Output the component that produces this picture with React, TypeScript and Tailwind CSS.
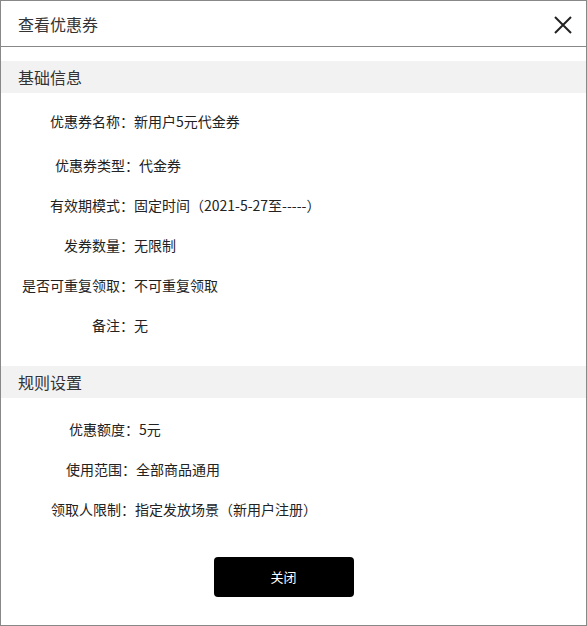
import React from 'react';

interface Row {
  label: string;
  value: string;
  labelWidth: string;
  extra?: string;
}

const basicRows: Row[] = [
  { label: '优惠券名称：', value: '新用户5元代金券', labelWidth: 'w-[133px]' },
  { label: '优惠券类型：', value: '代金券', labelWidth: 'w-[138px]', extra: 'mt-1' },
  { label: '有效期模式：', value: '固定时间（2021-5-27至-----）', labelWidth: 'w-[133px]' },
  { label: '发券数量：', value: '无限制', labelWidth: 'w-[133px]' },
  { label: '是否可重复领取：', value: '不可重复领取', labelWidth: 'w-[133px]' },
  { label: '备注：', value: '无', labelWidth: 'w-[133px]' },
];

const ruleRows: Row[] = [
  { label: '优惠额度：', value: '5元', labelWidth: 'w-[138px]' },
  { label: '使用范围：', value: '全部商品通用', labelWidth: 'w-[135px]' },
  { label: '领取人限制：', value: '指定发放场景（新用户注册）', labelWidth: 'w-[134px]' },
];

const InfoRow: React.FC<{ row: Row }> = ({ row }) => (
  <div className={`flex h-10 items-center text-[14px] text-[#222] ${row.extra ?? ''}`}>
    <span className={`${row.labelWidth} shrink-0 text-right`}>{row.label}</span>
    <span>{row.value}</span>
  </div>
);

const SectionTitle: React.FC<{ title: string }> = ({ title }) => (
  <div className="flex h-8 items-center bg-[#f2f2f2] px-[17px] text-[16px] text-[#333]">
    {title}
  </div>
);

export default function App() {
  return (
    <div
      className="flex h-[626px] w-[587px] flex-col border border-[#888] bg-white"
      style={{ fontFamily: '"Noto Sans CJK SC", "Noto Sans", sans-serif' }}
    >
      {/* header */}
      <div className="flex h-[46px] shrink-0 items-center justify-between border-b border-[#888] pl-[17px] pr-[13px]">
        <span className="text-[16px] text-[#333]">查看优惠券</span>
        <svg width="20" height="20" viewBox="0 0 20 20" className="mt-[2px]">
          <path d="M2 2 L18 18 M18 2 L2 18" stroke="#222" strokeWidth="2" fill="none" />
        </svg>
      </div>

      <div className="mt-[14px]">
        <SectionTitle title="基础信息" />
        <div className="pt-2">
          {basicRows.map((row) => (
            <InfoRow key={row.label} row={row} />
          ))}
        </div>
      </div>

      <div className="mt-[21px]">
        <SectionTitle title="规则设置" />
        <div className="pt-[11px]">
          {ruleRows.map((row) => (
            <InfoRow key={row.label} row={row} />
          ))}
        </div>
      </div>

      <div className="mt-[28px] flex justify-center pr-[20px]">
        <button className="h-10 w-[140px] rounded bg-black text-[13px] text-white">关闭</button>
      </div>
    </div>
  );
}
